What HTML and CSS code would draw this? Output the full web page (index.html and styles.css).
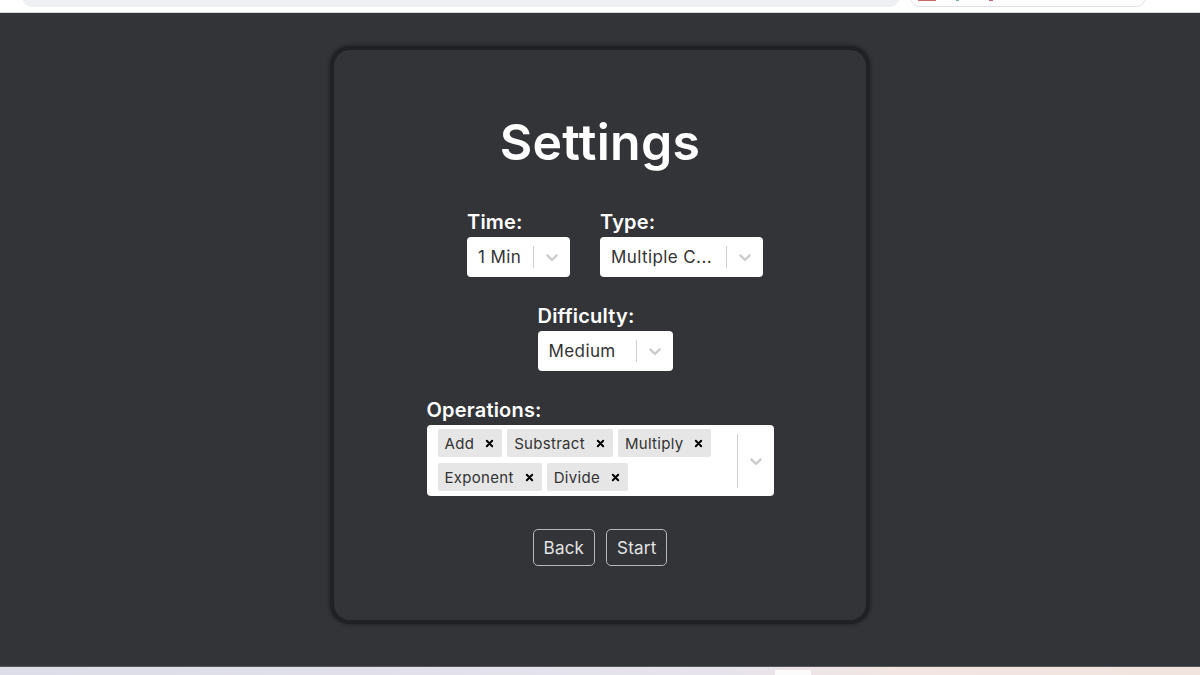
FILE: index.html
```html
<!DOCTYPE html>
<html lang="en">
<head>
<meta charset="utf-8">
<title>Settings</title>
<link rel="stylesheet" href="styles.css">
</head>
<body>
<div class="chrome">
  <div class="address"></div>
  <div class="ext">
    <span class="ext-i red"></span><span class="ext-i teal"></span><span class="ext-i pink"></span>
  </div>
</div>
<main class="stage">
  <section class="card">
    <h1 class="title">Settings</h1>
    <div class="row row-top">
      <div class="field">
        <label class="label">Time:</label>
        <div class="select w-time">
          <div class="value">1 Min</div>
          <div class="sep"></div>
          <div class="ind"><svg viewBox="0 0 20 20" width="20" height="20"><path d="M4.516 7.548c0.436-0.446 1.043-0.481 1.576 0l3.908 3.747 3.908-3.747c0.533-0.481 1.141-0.446 1.574 0 0.436 0.445 0.408 1.197 0 1.615-0.406 0.418-4.695 4.502-4.695 4.502-0.217 0.223-0.502 0.335-0.787 0.335s-0.57-0.112-0.789-0.335c0 0-4.287-4.084-4.695-4.502s-0.436-1.17 0-1.615z"/></svg></div>
        </div>
      </div>
      <div class="field">
        <label class="label">Type:</label>
        <div class="select w-type">
          <div class="value">Multiple C...</div>
          <div class="sep"></div>
          <div class="ind"><svg viewBox="0 0 20 20" width="20" height="20"><path d="M4.516 7.548c0.436-0.446 1.043-0.481 1.576 0l3.908 3.747 3.908-3.747c0.533-0.481 1.141-0.446 1.574 0 0.436 0.445 0.408 1.197 0 1.615-0.406 0.418-4.695 4.502-4.695 4.502-0.217 0.223-0.502 0.335-0.787 0.335s-0.57-0.112-0.789-0.335c0 0-4.287-4.084-4.695-4.502s-0.436-1.17 0-1.615z"/></svg></div>
        </div>
      </div>
    </div>
    <div class="row row-diff">
      <div class="field">
        <label class="label">Difficulty:</label>
        <div class="select w-diff">
          <div class="value">Medium</div>
          <div class="sep"></div>
          <div class="ind"><svg viewBox="0 0 20 20" width="20" height="20"><path d="M4.516 7.548c0.436-0.446 1.043-0.481 1.576 0l3.908 3.747 3.908-3.747c0.533-0.481 1.141-0.446 1.574 0 0.436 0.445 0.408 1.197 0 1.615-0.406 0.418-4.695 4.502-4.695 4.502-0.217 0.223-0.502 0.335-0.787 0.335s-0.57-0.112-0.789-0.335c0 0-4.287-4.084-4.695-4.502s-0.436-1.17 0-1.615z"/></svg></div>
        </div>
      </div>
    </div>
    <div class="row">
      <div class="field">
        <label class="label">Operations:</label>
        <div class="select multi">
          <div class="chips">
            <span class="chip"><span class="chip-label">Add</span><span class="chip-x"><svg viewBox="0 0 10 10" width="9" height="9"><path d="M2 2L8 8M8 2L2 8"/></svg></span></span>
            <span class="chip"><span class="chip-label">Substract</span><span class="chip-x"><svg viewBox="0 0 10 10" width="9" height="9"><path d="M2 2L8 8M8 2L2 8"/></svg></span></span>
            <span class="chip"><span class="chip-label">Multiply</span><span class="chip-x"><svg viewBox="0 0 10 10" width="9" height="9"><path d="M2 2L8 8M8 2L2 8"/></svg></span></span>
            <span class="break"></span>
            <span class="chip"><span class="chip-label">Exponent</span><span class="chip-x"><svg viewBox="0 0 10 10" width="9" height="9"><path d="M2 2L8 8M8 2L2 8"/></svg></span></span>
            <span class="chip"><span class="chip-label">Divide</span><span class="chip-x"><svg viewBox="0 0 10 10" width="9" height="9"><path d="M2 2L8 8M8 2L2 8"/></svg></span></span>
          </div>
          <div class="sep"></div>
          <div class="ind"><svg viewBox="0 0 20 20" width="20" height="20"><path d="M4.516 7.548c0.436-0.446 1.043-0.481 1.576 0l3.908 3.747 3.908-3.747c0.533-0.481 1.141-0.446 1.574 0 0.436 0.445 0.408 1.197 0 1.615-0.406 0.418-4.695 4.502-4.695 4.502-0.217 0.223-0.502 0.335-0.787 0.335s-0.57-0.112-0.789-0.335c0 0-4.287-4.084-4.695-4.502s-0.436-1.17 0-1.615z"/></svg></div>
        </div>
      </div>
    </div>
    <div class="buttons">
      <button class="btn">Back</button>
      <button class="btn">Start</button>
    </div>
  </section>
</main>
<div class="taskbar"><span class="task-item"></span></div>
</body>
</html>
```

FILE: styles.css
```css
* { box-sizing: border-box; }
html, body { margin: 0; padding: 0; }
body {
  width: 1200px;
  height: 675px;
  overflow: hidden;
  background: #333438;
  font-family: Inter, "Noto Sans", sans-serif;
  display: flex;
  flex-direction: column;
}

.chrome {
  height: 13px;
  flex: none;
  background: #ffffff;
  border-bottom: 1px solid #d6d7da;
  position: relative;
}
.address {
  position: absolute;
  left: 22px;
  top: -14px;
  width: 878px;
  height: 21px;
  border-radius: 10px;
  background: #eef0f4;
}
.ext {
  position: absolute;
  left: 910px;
  top: -14px;
  width: 236px;
  height: 21px;
  border-radius: 10px;
  border: 1px solid #dfe1e5;
  background: #fff;
}
.ext-i { position: absolute; bottom: 5px; height: 3px; }
.ext-i.red { left: 7px; width: 18px; background: #c96a6a; }
.ext-i.teal { left: 45px; width: 3px; background: #6fb5ac; }
.ext-i.pink { left: 78px; width: 4px; background: #c9607a; }

.stage {
  flex: 1;
  display: flex;
  justify-content: center;
  padding-top: 33px;
}

.card {
  width: 540px;
  height: 578px;
  border: 4px solid #202124;
  border-radius: 20px;
  background: #333438;
  box-shadow: 0 0 4px rgba(0, 0, 0, 0.45);
  display: flex;
  flex-direction: column;
  align-items: center;
  color: #ffffff;
}

.title {
  margin: 62px 0 0;
  font-size: 50px;
  font-weight: 600;
  line-height: 60px;
  letter-spacing: 0.3px;
}

.row {
  display: flex;
  gap: 30px;
  margin-top: 26px;
}
.row-top { margin-top: 37px; margin-left: 30px; }
.row-diff { margin-left: 10px; }

.field {
  display: flex;
  flex-direction: column;
}
.label {
  font-size: 20px;
  font-weight: 600;
  line-height: 26px;
  margin-bottom: 2px;
  letter-spacing: 0.2px;
}

.select {
  display: flex;
  align-items: center;
  height: 40px;
  background: #fff;
  border-radius: 4px;
  color: #333;
}
.w-time { width: 103px; }
.w-type { width: 163px; }
.w-diff { width: 135px; }
.value {
  flex: 1;
  min-width: 0;
  padding-left: 11px;
  font-size: 17px;
  letter-spacing: 0.4px;
  white-space: nowrap;
  overflow: hidden;
}
.sep {
  width: 1px;
  align-self: stretch;
  margin: 9px 0;
  background: #d0d0d0;
}
.ind {
  width: 36px;
  display: flex;
  justify-content: center;
  align-items: center;
}
.ind svg { fill: #cccccc; }

.multi {
  width: 347px;
  height: 71px;
  align-items: stretch;
}
.chips {
  flex: 1;
  display: flex;
  flex-wrap: wrap;
  align-content: flex-start;
  padding: 1px 6px 0 11px;
}
.break { flex-basis: 100%; height: 0; }
.chip {
  display: flex;
  align-items: center;
  height: 28px;
  margin: 3px 5px 3px 0;
  background: #e6e6e6;
  border-radius: 2px;
  font-size: 15px;
  letter-spacing: 0.3px;
}
.chip-label { padding: 0 0 0 7px; color: #333; }
.chip-x {
  display: flex;
  align-items: center;
  padding: 0 8px 0 11px;
}
.chip-x svg { stroke: #000; stroke-width: 2.2; stroke-linecap: round; }
.multi .sep { margin: 9px 0 8px; }

.buttons {
  display: flex;
  gap: 11px;
  margin-top: 33px;
}
.btn {
  height: 37px;
  padding: 0 10px;
  background: transparent;
  border: 1px solid #b8b8b8;
  border-radius: 5px;
  color: #e4e4e4;
  font-family: Inter, "Noto Sans", sans-serif;
  font-size: 17px;
  letter-spacing: 0.2px;
}

.taskbar {
  height: 9px;
  flex: none;
  border-top: 1px solid #55565a;
  background: linear-gradient(90deg, #dcdde8 0%, #e6e3ec 60%, #f3e6e2 75%, #f1e3de 100%);
  position: relative;
}
.task-item {
  position: absolute;
  left: 775px;
  top: 3px;
  width: 36px;
  height: 6px;
  background: #fbfbfb;
}
```
